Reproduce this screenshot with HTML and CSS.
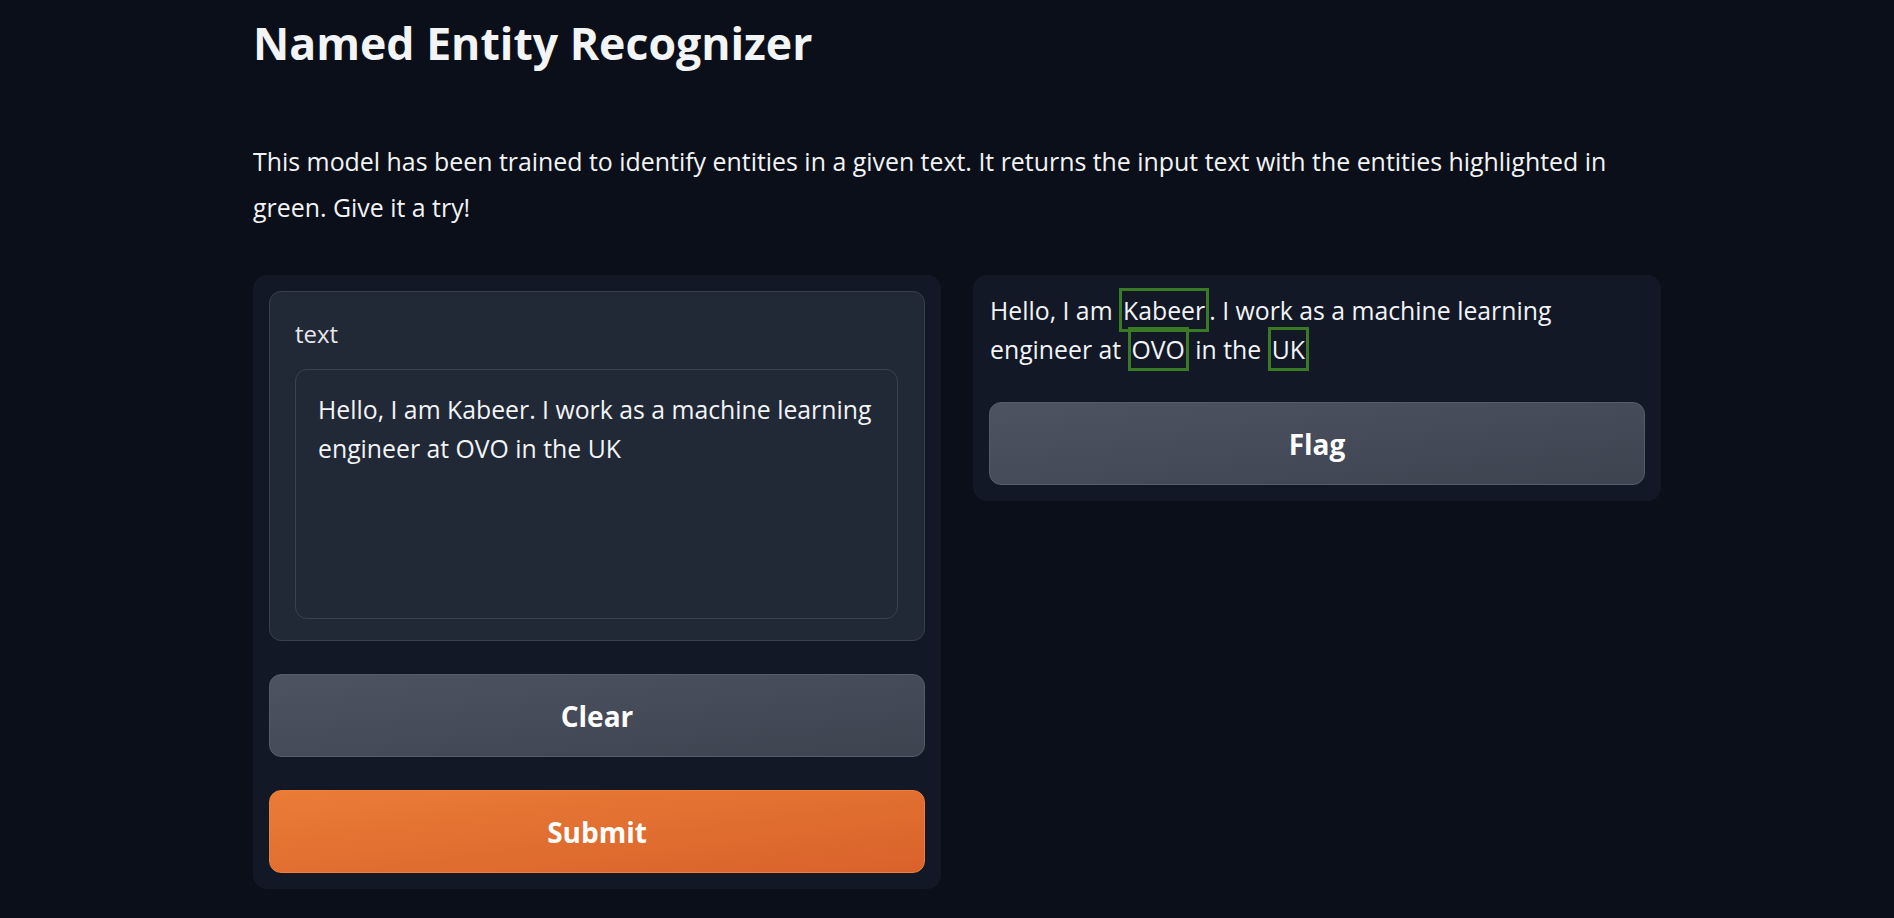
FILE: index.html
```html
<!DOCTYPE html>
<html lang="en">
<head>
<meta charset="utf-8">
<title>Named Entity Recognizer</title>
<link rel="stylesheet" href="styles.css">
</head>
<body>
<div class="app">
  <h1 class="title">Named Entity Recognizer</h1>
  <p class="desc">This model has been trained to identify entities in a given text. It returns the input text with the entities highlighted in green. Give it a try!</p>
  <div class="row">
    <div class="panel">
      <div class="block">
        <label class="label" for="inp">text</label>
        <textarea id="inp" class="input">Hello, I am Kabeer. I work as a machine learning engineer at OVO in the UK</textarea>
      </div>
      <button class="btn secondary">Clear</button>
      <button class="btn primary">Submit</button>
    </div>
    <div class="panel">
      <div class="highlight">Hello, I am <span class="ent">Kabeer</span>. I work as a machine learning engineer at <span class="ent">OVO</span> in the <span class="ent">UK</span></div>
      <button class="btn secondary">Flag</button>
    </div>
  </div>
</div>
</body>
</html>
```
FILE: styles.css
```css
html, body {
  margin: 0;
  padding: 0;
  background: #0b0f19;
  color: #f3f4f6;
  font-family: "Open Sans", "Noto Sans", sans-serif;
}

.app {
  width: 1408px;
  padding: 16px 0 0 253px;
}

.title {
  margin: 0;
  font-size: 44.6px;
  font-weight: 700;
  line-height: 54px;
  color: #f3f4f6;
}

.desc {
  margin: 68px 0 0;
  font-size: 24.9px;
  line-height: 46px;
  color: #f3f4f6;
}

.row {
  margin-top: 45px;
  display: flex;
  gap: 32px;
  align-items: flex-start;
}

.panel {
  flex: 1;
  background: #121826;
  border-radius: 14px;
  padding: 16px;
  display: flex;
  flex-direction: column;
  gap: 33px;
}

.block {
  background: #212836;
  border: 1px solid #383f4d;
  border-radius: 12px;
  padding: 25px 26px 21px 25px;
  display: flex;
  flex-direction: column;
  gap: 19px;
}

.label {
  font-size: 24px;
  line-height: 33px;
  color: #e5e7eb;
}

.input {
  display: block;
  box-sizing: border-box;
  width: 100%;
  height: 250px;
  margin: 0;
  resize: none;
  background: #212836;
  border: 1px solid #3a4150;
  border-radius: 12px;
  padding: 20px 22px 18px;
  font-family: "Open Sans", "Noto Sans", sans-serif;
  font-size: 24.8px;
  line-height: 39px;
  color: #f3f4f6;
  outline: none;
}

.btn {
  display: block;
  width: 100%;
  height: 83px;
  margin: 0;
  border-radius: 12px;
  font-family: "Open Sans", "Noto Sans", sans-serif;
  font-size: 28px;
  font-weight: 700;
  color: #ffffff;
  cursor: pointer;
}

.secondary {
  background: linear-gradient(to bottom right, #4d5361, #3e4350);
  border: 1px solid #565c69;
}

.primary {
  background: linear-gradient(to bottom right, #ea7c37, #d9622b);
  border: 1px solid #ec8038;
}

.highlight {
  padding: 2px 0 0 1px;
  margin-top: -2px;
  font-size: 24.8px;
  line-height: 39px;
  color: #f3f4f6;
}

.ent {
  border: 3px solid #3b7a24;
  padding: 2px 1px;
}
```
